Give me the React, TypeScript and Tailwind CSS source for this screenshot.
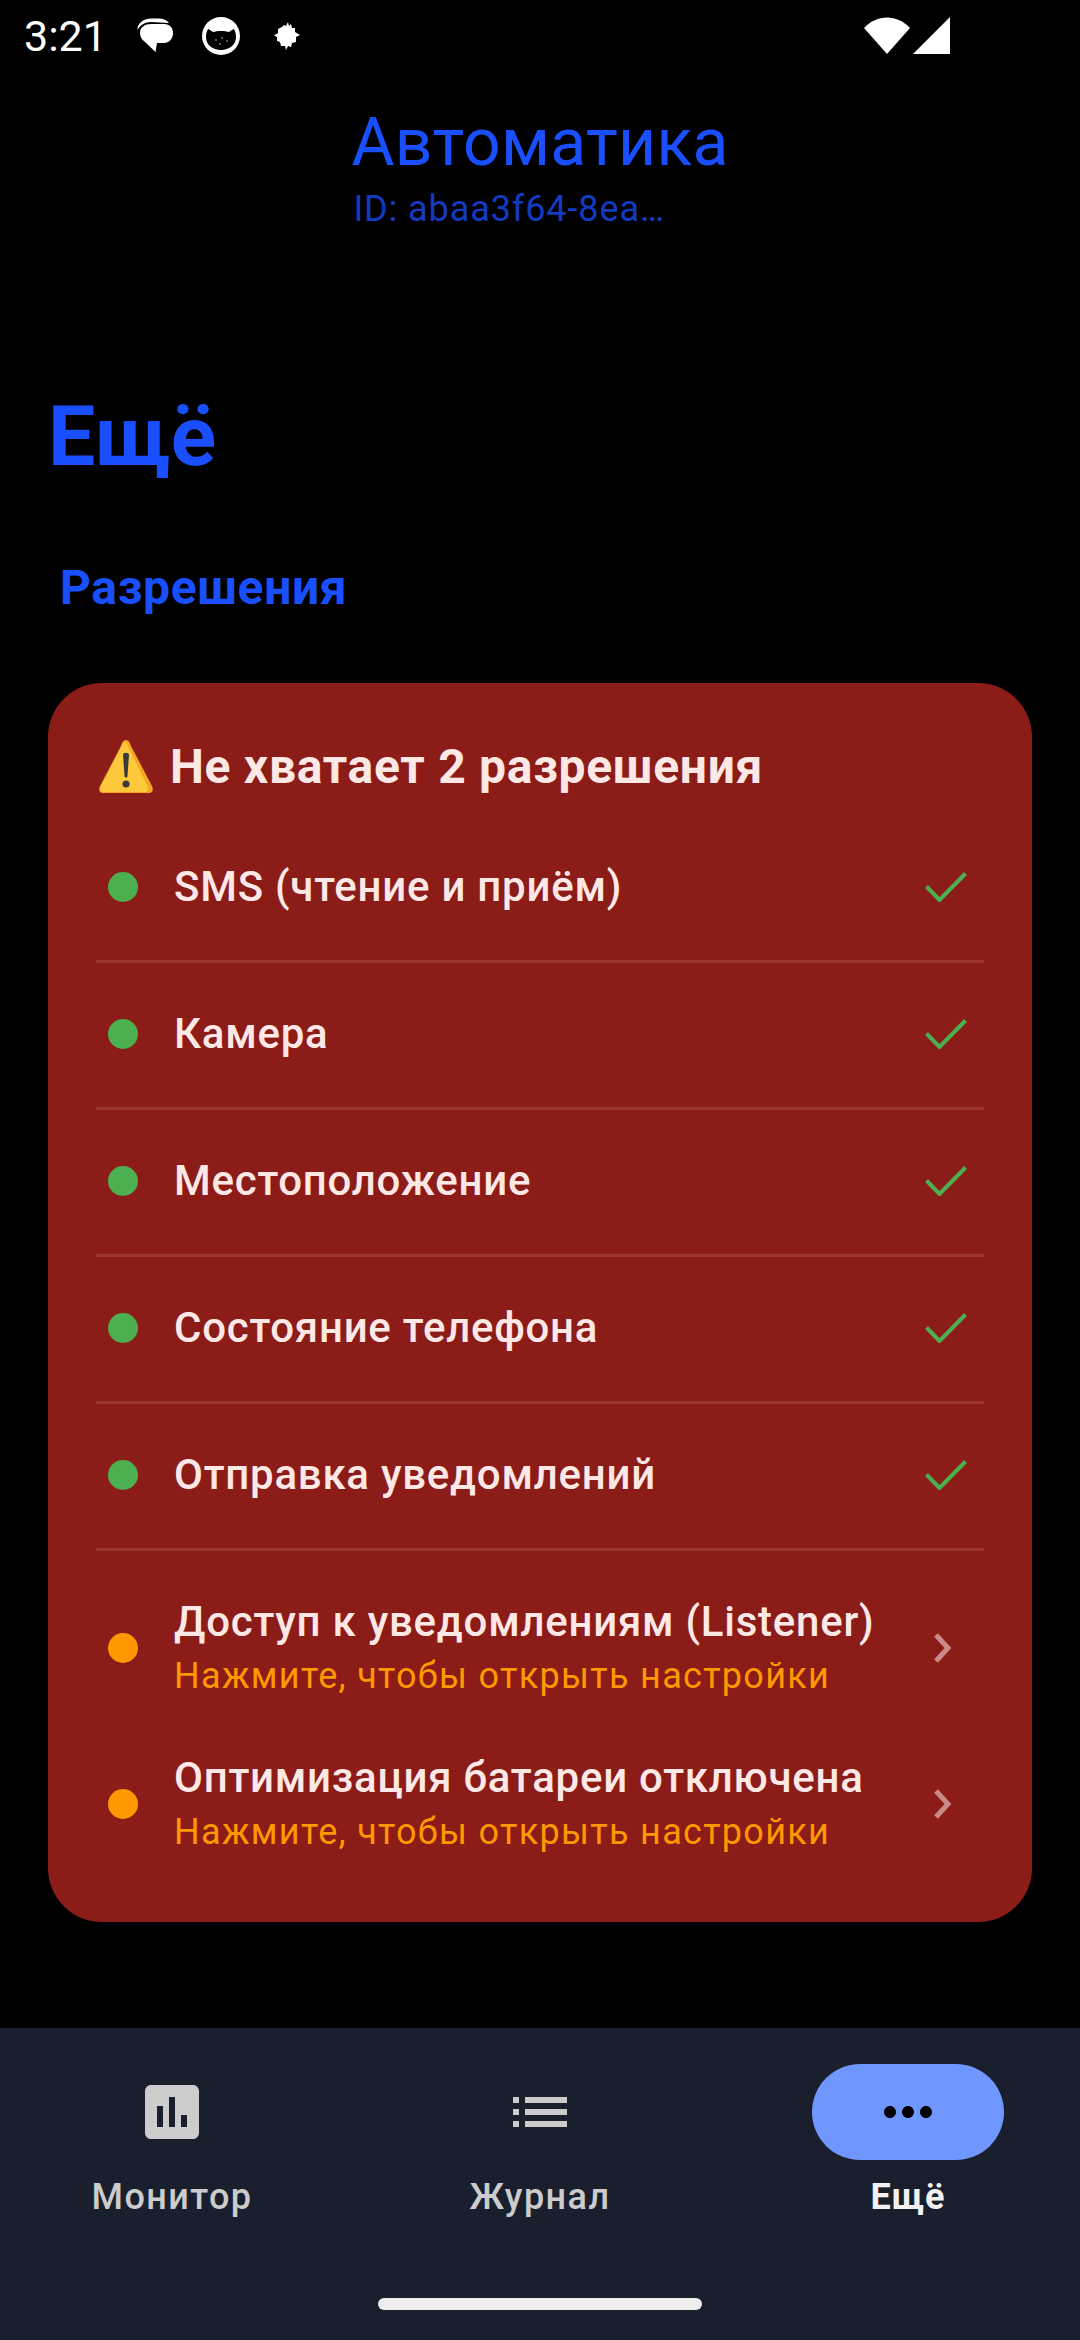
const OK_ITEMS = ['SMS (чтение и приём)', 'Камера', 'Местоположение', 'Состояние телефона', 'Отправка уведомлений']
const TODO_ITEMS = ['Доступ к уведомлениям (Listener)', 'Оптимизация батареи отключена']

function BubbleIcon() {
  return (
    <svg width="38" height="36" viewBox="0 0 38 36" className="block">
      <path d="M.5 12C0 6 6 .5 14 .5L22 .5C26 .5 30 2 32 5L14 4C8 4 3 7 .5 12Z" fill="#fff" />
      <path d="M3 15C3 9 8 6 14 6L27 6C33 6 36 10 36 15C36 21 32 25 27 25L20 25L18.500 34L8 24C5 22 3 19 3 15Z" fill="#fff" />
    </svg>
  )
}

function CatIcon() {
  return (
    <svg width="38" height="38" viewBox="0 0 38 38" className="block">
      <circle cx="19" cy="19" r="19" fill="#fff" />
      <path d="M4 20C4 16 5 13 6.500 12L11 15C15 13.500 23 13.500 27 15L31.500 12C33 13 34 16 34 20C34 28 27 33 19 33C11 33 4 28 4 20Z" fill="#000" />
      <circle cx="14" cy="23" r="1" fill="#777" />
      <circle cx="20" cy="21" r="1" fill="#777" />
      <circle cx="25" cy="24" r="1" fill="#777" />
      <circle cx="18" cy="27" r="1" fill="#777" />
    </svg>
  )
}

function SplatIcon() {
  return (
    <svg width="26" height="28" viewBox="0 0 26 28" className="block">
      <path d="M14 0L15 4L17 2L18 6L21 6L21 10L26 13L22 15L22 20L18 21L17 25L14 24L12 28L11 24L7 24L6 20L3 19L3 15L0 13.500L4 11L4 7L8 5L10 3L12 4Z" fill="#fff" />
    </svg>
  )
}

function WarningIcon() {
  return (
    <svg width="54" height="54" viewBox="0 0 54 54" className="block">
      <path d="M27 0C24 0 23 3 22 6L1 46C-1 51 1 53 5 53L49 53C53 53 55 51 53 46L32 6C31 3 30 0 27 0Z" fill="#f5a623" />
      <path d="M26 2C24 2 23 5 22 7L2 46C0 50 2 52 5 52L46 52C49 52 50 49 48 45L29 6C28 4 27 2 26 2Z" fill="#fdc93a" />
      <path d="M24 15C24 12 30 12 30 15L28.500 36C28.300 38 25.700 38 25.500 36Z" fill="#3a3a3a" />
      <circle cx="27" cy="44" r="3.500" fill="#3a3a3a" />
    </svg>
  )
}

function OkRow({ label }: { label: string }) {
  return (
    <div className="flex h-[147px] items-center border-b-[3px] border-[#9a3531] pb-[2px] pl-3">
      <span className="h-[30px] w-[30px] shrink-0 rounded-full bg-[#4caf50]" />
      <span className="ml-[36px] flex-1 text-[42px] leading-[54px] font-medium tracking-[0.75px] text-[#fde8e6]">{label}</span>
      <svg width="42" height="30" viewBox="0 0 42 30" className="mr-[17px] block">
        <path d="M1.500 14.500L14.500 28L40.500 1.500" fill="none" stroke="#4caf50" strokeWidth="4" />
      </svg>
    </div>
  )
}

function TodoRow({ label }: { label: string }) {
  return (
    <div className="flex h-[156px] items-center pl-3">
      <span className="h-[30px] w-[30px] shrink-0 rounded-full bg-[#ff9800]" />
      <div className="ml-[36px] flex-1">
        <p className="text-[42px] leading-[54px] font-medium tracking-[0.75px] text-[#fde8e6]">{label}</p>
        <p className="mt-[2px] text-[36px] leading-[50px] tracking-[1.32px] text-[#ff9800]">Нажмите, чтобы открыть настройки</p>
      </div>
      <svg width="20" height="30" viewBox="0 0 20 30" className="mr-[31px] block">
        <path d="M3 2L15 15L3 28" fill="none" stroke="#c98a88" strokeWidth="5" />
      </svg>
    </div>
  )
}

export default function App() {
  return (
    <div className="flex h-[2340px] w-[1080px] flex-col overflow-hidden bg-black font-['Roboto',sans-serif]">
      <div className="flex h-[66px] items-center pl-[24px] pt-[6px] text-white">
        <span className="w-[113px] text-[43px] leading-[50px]">3:21</span>
        <BubbleIcon />
        <span className="ml-[27px]"><CatIcon /></span>
        <span className="ml-[34px]"><SplatIcon /></span>
        <svg width="46" height="38" viewBox="0 0 46 38" className="ml-[564px] block">
          <path d="M0 11C13 -3 33 -3 46 11L23 37Z" fill="#fff" />
        </svg>
        <svg width="38" height="38" viewBox="0 0 38 38" className="ml-[3px] block">
          <path d="M37 0L37 37L0 37Z" fill="#fff" />
        </svg>
      </div>

      <div className="flex h-[174px] justify-center pt-[40px] text-[#1a4fff]">
        <div>
          <h1 className="text-[66px] leading-[74px] tracking-[0.3px]">Автоматика</h1>
          <p className="mt-[7px] pl-[2px] text-[36px] leading-[44px] tracking-[0.9px] opacity-75">ID: abaa3f64-8ea…</p>
        </div>
      </div>

      <h2 className="mt-[152px] pl-[48px] text-[84px] leading-[90px] font-bold text-[#1a4fff]">Ещё</h2>
      <h3 className="mt-[76px] pl-[60px] text-[48px] leading-[60px] font-bold tracking-[0.65px] text-[#1a4fff]">Разрешения</h3>

      <section className="mx-[48px] mt-[65px] h-[1239px] rounded-[54px] bg-[#8b1c18] px-[48px] pt-[57px]">
        <div className="flex h-[76px] items-start pl-[3px]">
          <WarningIcon />
          <span className="ml-[17px] text-[48px] leading-[54px] font-bold tracking-[0.7px] text-[#fde8e6]">Не хватает 2 разрешения</span>
        </div>
        {OK_ITEMS.map((item) => (
          <OkRow key={item} label={item} />
        ))}
        <div className="h-[19px]" />
        {TODO_ITEMS.map((item) => (
          <TodoRow key={item} label={item} />
        ))}
      </section>

      <nav className="mt-auto h-[312px] bg-[#1a1f2e]">
        <div className="grid grid-cols-3 gap-[48px] px-[12px] pt-[36px]">
          <div className="flex flex-col items-center">
            <div className="flex h-[96px] items-center justify-center">
              <svg width="72" height="72" viewBox="0 0 24 24" className="block">
                <path d="M19 3H5c-1.100 0-2 .9-2 2v14c0 1.100.9 2 2 2h14c1.100 0 2-.9 2-2V5c0-1.100-.9-2-2-2zM9 17H7v-7h2v7zm4 0h-2V7h2v10zm4 0h-2v-4h2v4z" fill="#cccccc" />
              </svg>
            </div>
            <span className="mt-[13px] text-[36px] leading-[48px] font-medium tracking-[1.44px] text-[#cccccc]">Монитор</span>
          </div>
          <div className="flex flex-col items-center">
            <div className="flex h-[96px] items-center justify-center">
              <svg width="72" height="72" viewBox="0 0 24 24" className="block">
                <path d="M3 13h2v-2H3v2zm0 4h2v-2H3v2zm0-8h2V7H3v2zm4 4h14v-2H7v2zm0 4h14v-2H7v2zM7 7v2h14V7H7z" fill="#cccccc" />
              </svg>
            </div>
            <span className="mt-[13px] text-[36px] leading-[48px] font-medium tracking-[1.44px] text-[#cccccc]">Журнал</span>
          </div>
          <div className="flex flex-col items-center">
            <div className="flex h-[96px] w-[192px] items-center justify-center rounded-[48px] bg-[#6f97ff]">
              <svg width="72" height="72" viewBox="0 0 24 24" className="block">
                <path d="M6 10c-1.100 0-2 .9-2 2s.9 2 2 2 2-.9 2-2-.9-2-2-2zm12 0c-1.100 0-2 .9-2 2s.9 2 2 2 2-.9 2-2-.9-2-2-2zm-6 0c-1.100 0-2 .9-2 2s.9 2 2 2 2-.9 2-2-.9-2-2-2z" fill="#000" />
              </svg>
            </div>
            <span className="mt-[13px] text-[36px] leading-[48px] font-bold tracking-[1px] text-[#f2f2f2]">Ещё</span>
          </div>
        </div>
        <div className="mx-auto mt-[77px] h-[12px] w-[324px] rounded-full bg-[#eeeeee]" />
      </nav>
    </div>
  )
}
